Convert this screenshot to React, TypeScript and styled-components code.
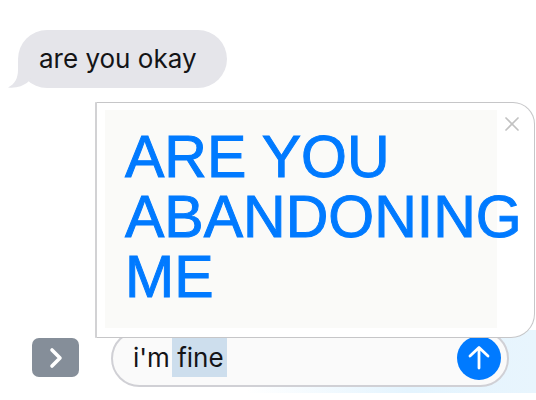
import React, { useState } from "react";
import styled, { createGlobalStyle } from "styled-components";

const GlobalStyle = createGlobalStyle`
  *, *::before, *::after { box-sizing: border-box; }
  body {
    margin: 0;
    background: #fff;
    color: #141416;
    font-family: Inter, Roboto, "Liberation Sans", sans-serif;
    overflow-x: hidden;
  }
`;

const Conversation = styled.main`
  display: flex;
  flex-direction: column;
  padding-top: 30px;
`;

const Bubble = styled.p`
  position: relative;
  align-self: flex-start;
  margin: 0 0 14px 18px;
  padding: 13px 30px 13px 21px;
  border-radius: 29px;
  background: #e5e5ea;
  font-size: 26px;
  line-height: 32px;
`;

const BubbleTail = styled.svg`
  position: absolute;
  left: -10px;
  bottom: 0;
`;

const EffectCard = styled.section`
  position: relative;
  z-index: 1;
  margin: 0 1px 0 95px;
  padding: 7px 37px 9px 8px;
  border: 1px solid #c6c6c8;
  border-left: 2px solid #d2d2d4;
  border-radius: 0 22px 24px 0;
  background: #fff;
`;

const CardPaper = styled.div`
  padding: 17px 0 21px 20px;
  background: #fafaf8;
`;

const Shout = styled.h1`
  margin: 0;
  color: #007aff;
  font-family: "Liberation Sans", Arial, sans-serif;
  font-size: 59px;
  font-weight: 400;
  line-height: 60px;
  -webkit-text-stroke: 1px #007aff;
`;

const CloseButton = styled.button`
  position: absolute;
  top: 9px;
  right: 10px;
  display: grid;
  place-items: center;
  width: 24px;
  height: 24px;
  padding: 0;
  border: 0;
  background: none;
`;

const Composer = styled.form`
  display: flex;
  align-items: flex-start;
  gap: 32px;
  margin-top: -8px;
  padding: 0 27px 6px 32px;
  background: linear-gradient(90deg, #fff 46%, #e4f4fe 76%, #e8f5fd 100%);
`;

const AppsButton = styled.button`
  display: grid;
  place-items: center;
  flex: none;
  width: 47px;
  height: 39px;
  margin-top: 8px;
  padding: 0;
  border: 0;
  border-radius: 7px;
  background: #858e99;
`;

const Field = styled.div`
  display: flex;
  align-items: center;
  flex: 1;
  min-width: 0;
  height: 57px;
  padding: 0 6px 2px 20px;
  border: 2px solid #d0d0d5;
  border-radius: 29px;
  background: #fafafa;
`;

const MessageInput = styled.input`
  flex: 1;
  min-width: 0;
  height: 42px;
  padding: 0;
  border: 0;
  outline: 0;
  background: linear-gradient(#cddeed, #cddeed) 39px 0 / 55px 40px no-repeat;
  color: #141416;
  font-family: inherit;
  font-size: 26px;
  line-height: 32px;
`;

const SendButton = styled.button`
  display: grid;
  place-items: center;
  flex: none;
  width: 44px;
  height: 44px;
  padding: 0;
  border: 0;
  border-radius: 50%;
  background: #007aff;
`;

export default function App() {
  const [draft, setDraft] = useState("i'm fine");

  return (
    <>
      <GlobalStyle />
      <Conversation>
        <Bubble>
          <BubbleTail width="30" height="28" viewBox="0 0 30 28" aria-hidden="true">
            <path d="M10 0V10C10 18 7 24 0 27.5C8 28.5 15 26 20 22L30 10Z" fill="#e5e5ea" />
          </BubbleTail>
          are you okay
        </Bubble>
        <EffectCard>
          <CardPaper>
            <Shout>ARE YOU ABANDONING ME</Shout>
          </CardPaper>
          <CloseButton type="button" aria-label="Close">
            <svg width="14" height="14" viewBox="0 0 14 14" fill="none" stroke="#c2c2c2" strokeWidth="1.7" strokeLinecap="round">
              <path d="M1 1L13 13M13 1L1 13" />
            </svg>
          </CloseButton>
        </EffectCard>
        <Composer onSubmit={(event) => event.preventDefault()}>
          <AppsButton type="button" aria-label="Show apps">
            <svg width="16" height="22" viewBox="0 0 16 22" fill="none" stroke="#fff" strokeWidth="3.6" strokeLinecap="round" strokeLinejoin="round">
              <path d="M4 3L12 11L4 19" />
            </svg>
          </AppsButton>
          <Field>
            <MessageInput
              aria-label="Message"
              value={draft}
              onChange={(event) => setDraft(event.target.value)}
            />
            <SendButton type="submit" aria-label="Send">
              <svg width="22" height="26" viewBox="0 0 22 26" fill="none" stroke="#fff" strokeWidth="2.8" strokeLinecap="round" strokeLinejoin="round">
                <path d="M11 23V3M2 11L11 2.5L20 11" />
              </svg>
            </SendButton>
          </Field>
        </Composer>
      </Conversation>
    </>
  );
}
